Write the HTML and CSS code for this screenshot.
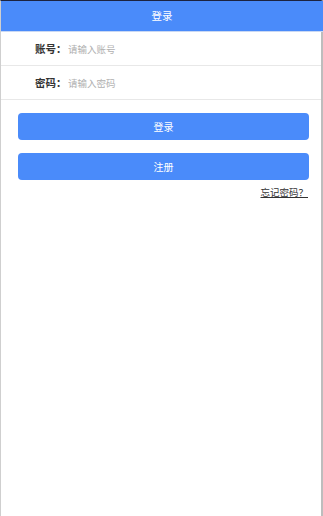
FILE: index.html
```html
<!DOCTYPE html>
<html lang="zh">
<head>
<meta charset="utf-8">
<link rel="stylesheet" href="styles.css">
</head>
<body>
<div class="frame">
  <header class="topbar">登录</header>
  <div class="form">
    <div class="row">
      <span class="label">账号：</span>
      <input class="field" type="text" placeholder="请输入账号">
    </div>
    <div class="row">
      <span class="label">密码：</span>
      <input class="field" type="password" placeholder="请输入密码">
    </div>
  </div>
  <div class="actions">
    <button class="btn">登录</button>
    <button class="btn">注册</button>
    <div class="forgot-wrap"><a class="forgot">忘记密码？</a></div>
  </div>
</div>
</body>
</html>
```
FILE: styles.css
```css
html, body {
  margin: 0;
  padding: 0;
  height: 100%;
}
body {
  background: #ffffff;
  font-family: "Noto Sans CJK SC", "Noto Sans", sans-serif;
}
.frame {
  box-sizing: border-box;
  height: 516px;
  border-top: 1px solid #1c2340;
  border-left: 1px solid #cfcfcf;
  border-right: 2px solid #bdbdbd;
  background: #ffffff;
}
.topbar {
  height: 30px;
  line-height: 30px;
  background: #4a8bfa;
  color: #ffffff;
  text-align: center;
  font-size: 10.5px;
  border-bottom: 1px solid #c9d8f3;
  margin-right: -2px;
}
.form {
  display: flex;
  flex-direction: column;
}
.row {
  display: flex;
  align-items: center;
  height: 34px;
  border-bottom: 1px solid #e8e8e8;
  padding-left: 34px;
  box-sizing: border-box;
}
.label {
  font-size: 10.5px;
  color: #333333;
  font-weight: 600;
  width: 33px;
}
.field {
  border: none;
  outline: none;
  padding: 0;
  font-family: inherit;
  font-size: 9.5px;
  color: #333;
  background: transparent;
  flex: 1;
}
.field::placeholder {
  color: #b0b0b0;
}
.actions {
  display: flex;
  flex-direction: column;
  padding: 13px 12px 0 17px;
}
.btn {
  height: 27px;
  border: none;
  border-radius: 4px;
  background: #4a8bfa;
  color: #ffffff;
  font-family: inherit;
  font-size: 10px;
  padding: 0;
  margin-bottom: 13px;
}
.btn + .btn {
  margin-bottom: 5px;
}
.forgot-wrap {
  display: flex;
  justify-content: flex-end;
}
.forgot {
  font-size: 9.5px;
  color: #333333;
  text-decoration: underline;
  cursor: pointer;
  margin-right: 1px;
}
```
